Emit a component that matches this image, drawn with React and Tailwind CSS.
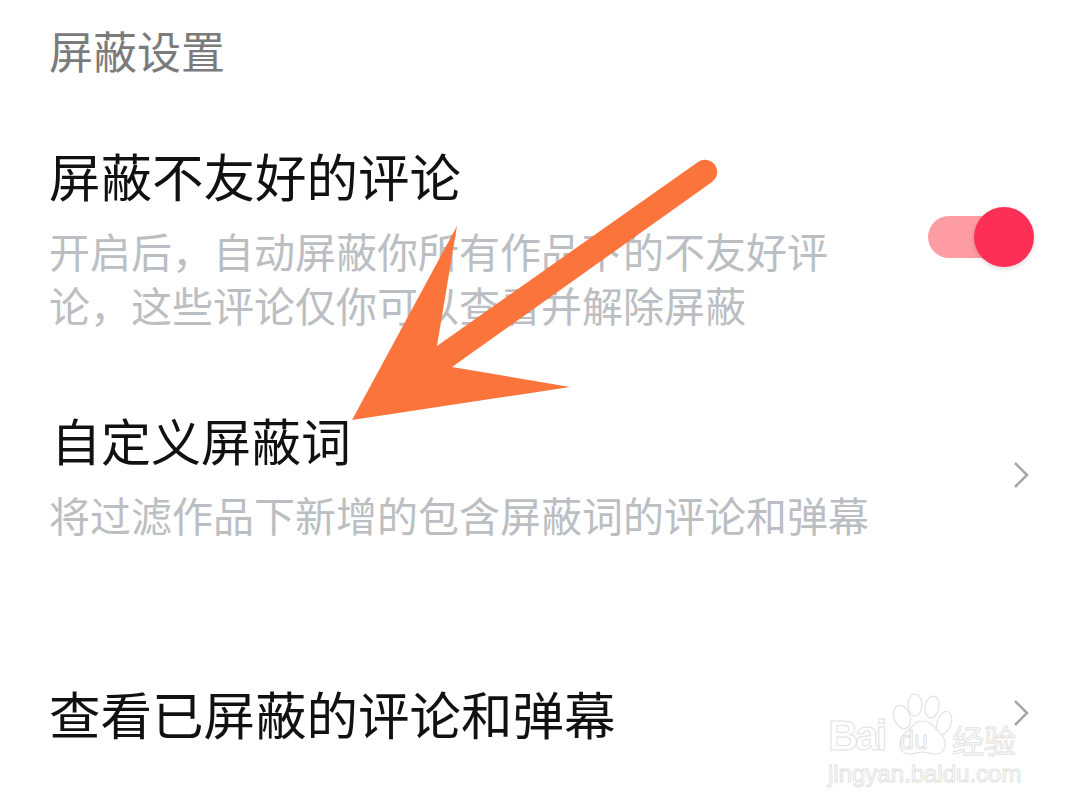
const Row = ({ title, sub, children, className, titleClass = 'text-[51.5px]', subWidth = 'w-[800px]' }) => (
  <div className={`flex items-center justify-between ${className}`}>
    <div className={subWidth}>
      <div className={`${titleClass} leading-[60px] text-[#111111]`}>{title}</div>
      {sub && <div className="mt-[18px] text-[41px] leading-[54px] text-[#bbbec2]">{sub}</div>}
    </div>
    {children}
  </div>
);

const Chevron = () => (
  <svg width="20" height="30" viewBox="0 0 20 30" fill="none" stroke="#a6a6a6" strokeWidth="2.5">
    <path d="M3 3l12 12L3 27" />
  </svg>
);

// watermark: white letters with a faint outline, sits over the page corner
const Watermark = () => (
  <div className="absolute bottom-[22px] right-[58px] flex w-[194px] flex-col font-['Liberation_Sans',sans-serif] text-white [-webkit-text-stroke:1px_#e2e2e2]">
    <div className="flex items-end">
      <div className="mb-[2px] w-[50px] text-[42px] leading-[44px] font-bold tracking-[-3px]">Bai</div>
      <div className="relative flex h-[60px] w-[72px] items-end justify-center pb-[6px]">
        <svg className="absolute left-0 top-0 overflow-visible" width="72" height="60" viewBox="0 0 72 60" fill="white" stroke="#e2e2e2" strokeWidth="1.2">
          <ellipse cx="24" cy="17" rx="8" ry="12" transform="rotate(-20 24 17)" />
          <ellipse cx="37" cy="5" rx="7" ry="11" />
          <ellipse cx="54" cy="7" rx="7" ry="11" transform="rotate(10 54 7)" />
          <ellipse cx="66" cy="23" rx="7" ry="12" transform="rotate(20 66 23)" />
          <path d="M45 21c9 0 12 8 17 12 7 6 8 21-5 21-5 0-8-2-12-2s-8 2-13 2c-13 0-12-15-5-21 6-4 9-12 18-12Z" />
        </svg>
        <div className="relative text-[25px] leading-[28px]">du</div>
      </div>
      <div className="mb-[5px] ml-[2px] text-[32px] leading-[32px] font-['Noto_Sans_CJK_SC',sans-serif]">经验</div>
    </div>
    <div className="text-[24px] leading-[28px] whitespace-nowrap">jingyan.baidu.com</div>
  </div>
);

export default function App() {
  return (
    <div className="relative h-[810px] w-[1080px] overflow-hidden bg-white font-['Noto_Sans_CJK_SC',sans-serif]">
      <div className="pl-[49px] pr-[48px] pt-[22px]">
        <div className="text-[44px] leading-[56px] text-[#7b7b7b]">屏蔽设置</div>
        <Row title="屏蔽不友好的评论" sub="开启后，自动屏蔽你所有作品下的不友好评论，这些评论仅你可以查看并解除屏蔽" className="mt-[67px]">
          <div className="relative mr-[12px] mt-[-2px] h-[42px] w-[92px] rounded-full bg-[#fd9da3]">
            <div className="absolute right-[-14px] top-[-9px] h-[60px] w-[60px] rounded-full bg-[#fe2f57] shadow-[0_2px_5px_rgba(0,0,0,0.15)]" />
          </div>
        </Row>
        <Row title="自定义屏蔽词" titleClass="text-[50px] pl-[2px]" subWidth="w-[840px]" sub="将过滤作品下新增的包含屏蔽词的评论和弹幕" className="mt-[78px]">
          <Chevron />
        </Row>
        <Row title="查看已屏蔽的评论和弹幕" className="mt-[142px]">
          <Chevron />
        </Row>
      </div>
      <svg className="absolute inset-0" width="1080" height="810" viewBox="0 0 1080 810">
        <path d="M457 226L352 420L570 387L452 367L712 182A12 12 0 0 0 698 162L437 346Z" fill="#fb743c" />
      </svg>
      <Watermark />
    </div>
  );
}
